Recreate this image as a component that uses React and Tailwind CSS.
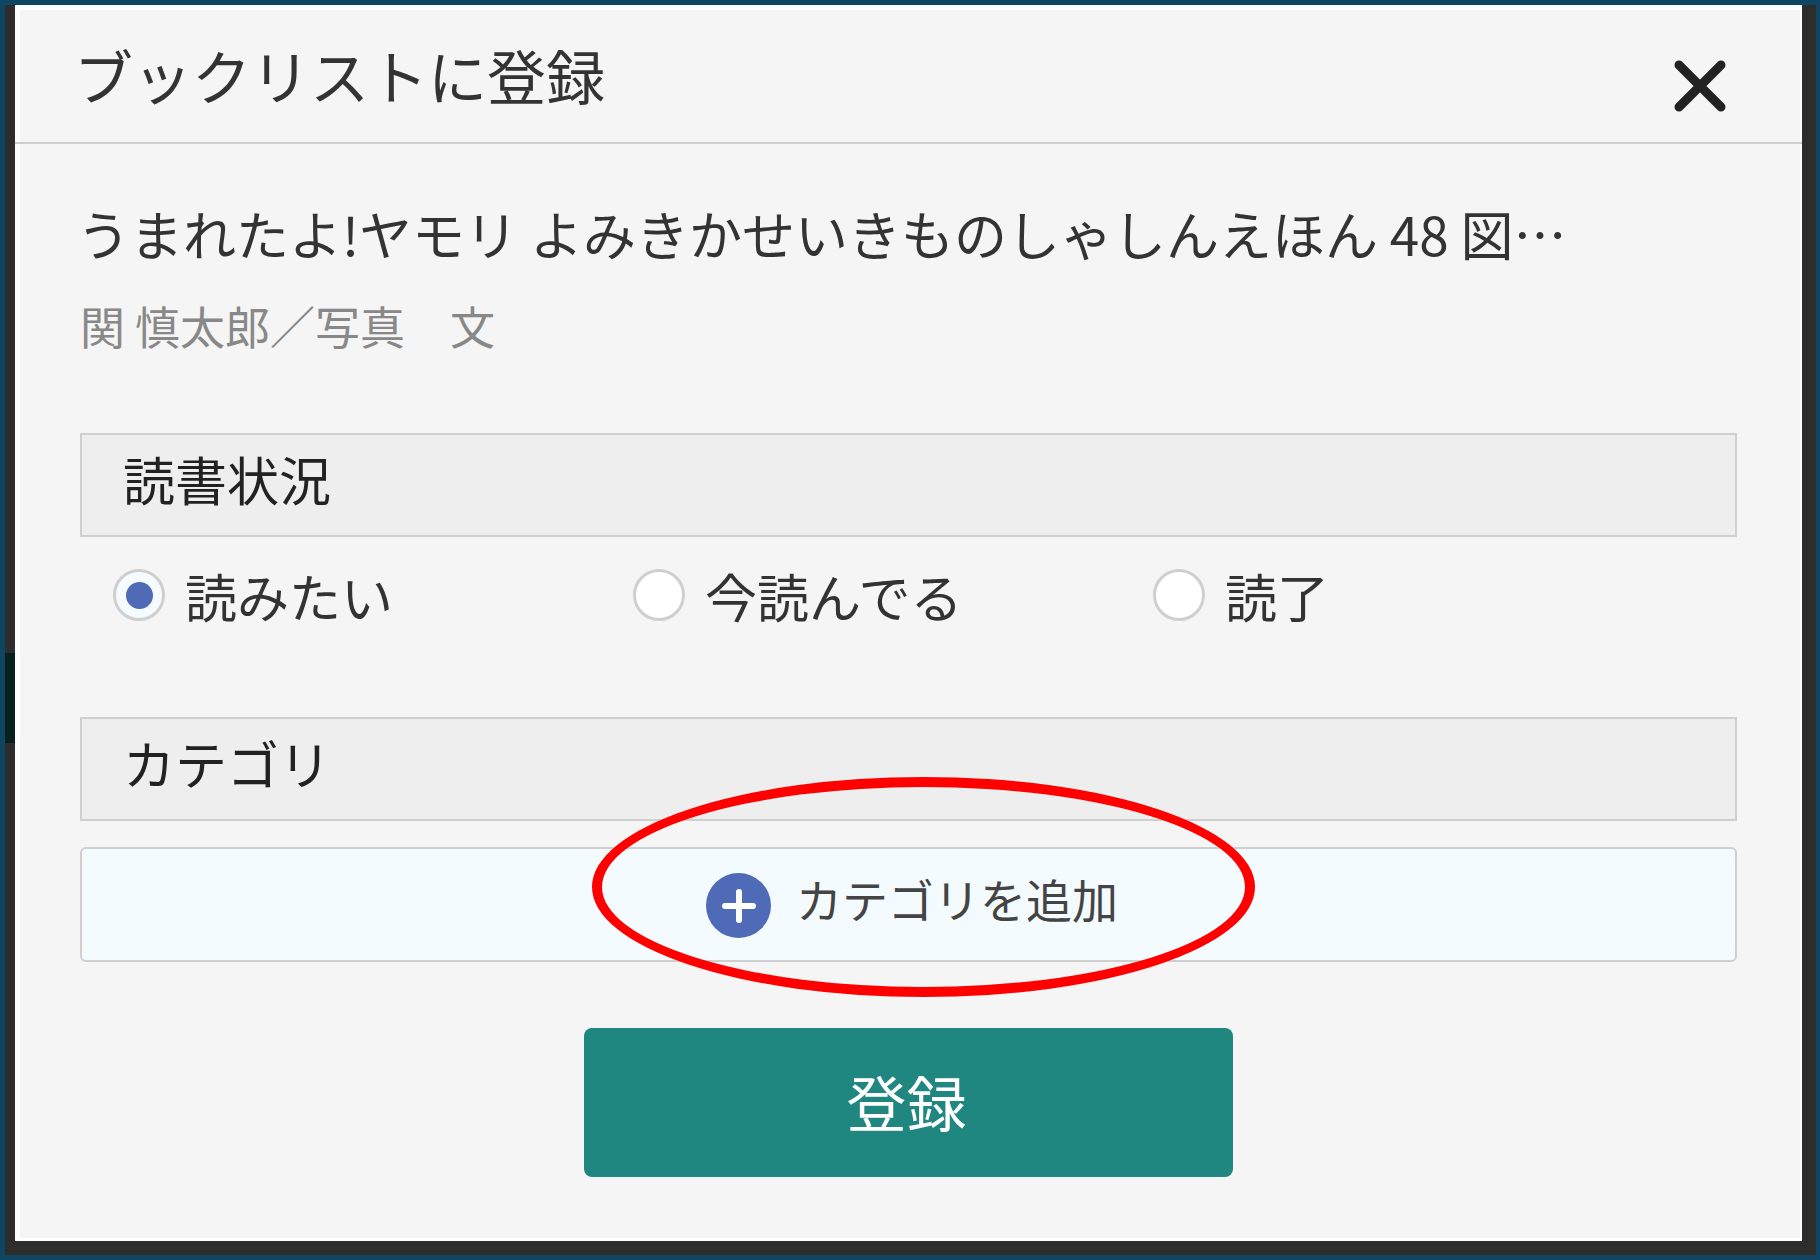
import React from "react";

const font = { fontFamily: '"Noto Sans CJK JP", "Noto Sans", sans-serif' };

const Radio = ({ label, checked }) => (
    <label className="flex items-start gap-[20px]">
        <span
            className={`flex h-[52px] w-[52px] items-center justify-center rounded-full border-[3px] border-[#cfcfcf] ${checked ? "bg-[#f5fbff]" : "bg-white"}`}
        >
            {checked && <span className="h-[27px] w-[27px] rounded-full bg-[#4f6ab7]" />}
        </span>
        <span className="mt-[-3px] text-[52px] leading-[60px] text-[#333]">{label}</span>
    </label>
);

const SectionHead = ({ children }) => (
    <div className="flex h-[104px] items-center border-2 border-[#cfcfcf] bg-[#eeeeee] pl-[41px] text-[52px] text-[#222]">
        <span className="-mt-[12px]">{children}</span>
    </div>
);

const App = () => {
    return (
        <div className="relative h-[1260px] w-[1820px] overflow-hidden bg-[#0e4560] pb-[5px] pl-[5px] pr-[4px] pt-[5px]" style={font}>
            <div className="relative h-full w-full bg-[#2d2d2d] pb-[14px] pl-[10px] pr-[14px]">
                {/* page behind the dialog */}
                <div className="absolute left-0 top-[648px] h-[90px] w-[10px] bg-[#07201f]" />

                <div className="relative h-full bg-[#f5f5f5] shadow-[inset_5px_5px_0_#ffffff,inset_-2px_-3px_0_#ffffff]">
                    {/* Header */}
                    <div className="flex h-[139px] items-start justify-between border-b-2 border-[#cfcfcf] pl-[59px] pr-[76px]">
                        <h1 className="mt-[32px] text-[59px] leading-[76px] text-[#333]">ブックリストに登録</h1>
                        <svg className="mt-[55px] h-[52px] w-[52px]" viewBox="0 0 52 52" fill="none">
                            <path d="M5 5L47 47M47 5L5 47" stroke="#222" strokeWidth="9" strokeLinecap="round" />
                        </svg>
                    </div>

                    <div className="px-[65px]">
                        {/* Book */}
                        <p className="mt-[59px] -ml-[3px] whitespace-nowrap text-[53px] leading-[60px] text-[#333]">
                            うまれたよ!ヤモリ よみきかせいきものしゃしんえほん 48 図…
                        </p>
                        <p className="mt-[38px] text-[45px] leading-[50px] text-[#888]">関 慎太郎／写真　文</p>

                        {/* Reading status */}
                        <div className="mt-[82px]">
                            <SectionHead>読書状況</SectionHead>
                        </div>
                        <div className="ml-[33px] mt-[32px] grid grid-cols-[520px_520px_520px]">
                            <Radio label="読みたい" checked />
                            <Radio label="今読んでる" />
                            <Radio label="読了" />
                        </div>

                        {/* Category */}
                        <div className="mt-[91px]">
                            <SectionHead>カテゴリ</SectionHead>
                        </div>
                        <div className="mt-[26px] flex h-[115px] items-center justify-center gap-[25px] rounded-[6px] border-2 border-[#cfcfcf] bg-[#f4fbff] pl-[7px]">
                            <span className="mt-[2px] flex h-[65px] w-[65px] items-center justify-center rounded-full bg-[#4f6ab7]">
                                <svg className="h-[34px] w-[34px]" viewBox="0 0 34 34" fill="none">
                                    <path d="M17 3V31M3 17H31" stroke="#fff" strokeWidth="6" strokeLinecap="round" />
                                </svg>
                            </span>
                            <span className="-mt-[12px] text-[46px] text-[#444]">カテゴリを追加</span>
                        </div>

                        <button className="mx-auto mt-[66px] flex h-[149px] w-[649px] items-center justify-center rounded-[8px] bg-[#1f877f] text-[60px] text-white">
                            <span className="-ml-[4px] -mt-[4px]">登録</span>
                        </button>
                    </div>

                    {/* red annotation ellipse */}
                    <div className="pointer-events-none absolute left-[577px] top-[772px] h-[220px] w-[663px] rounded-[50%] border-[10px] border-[#ff0000]" />
                </div>
            </div>
        </div>
    );
};

export default App;
